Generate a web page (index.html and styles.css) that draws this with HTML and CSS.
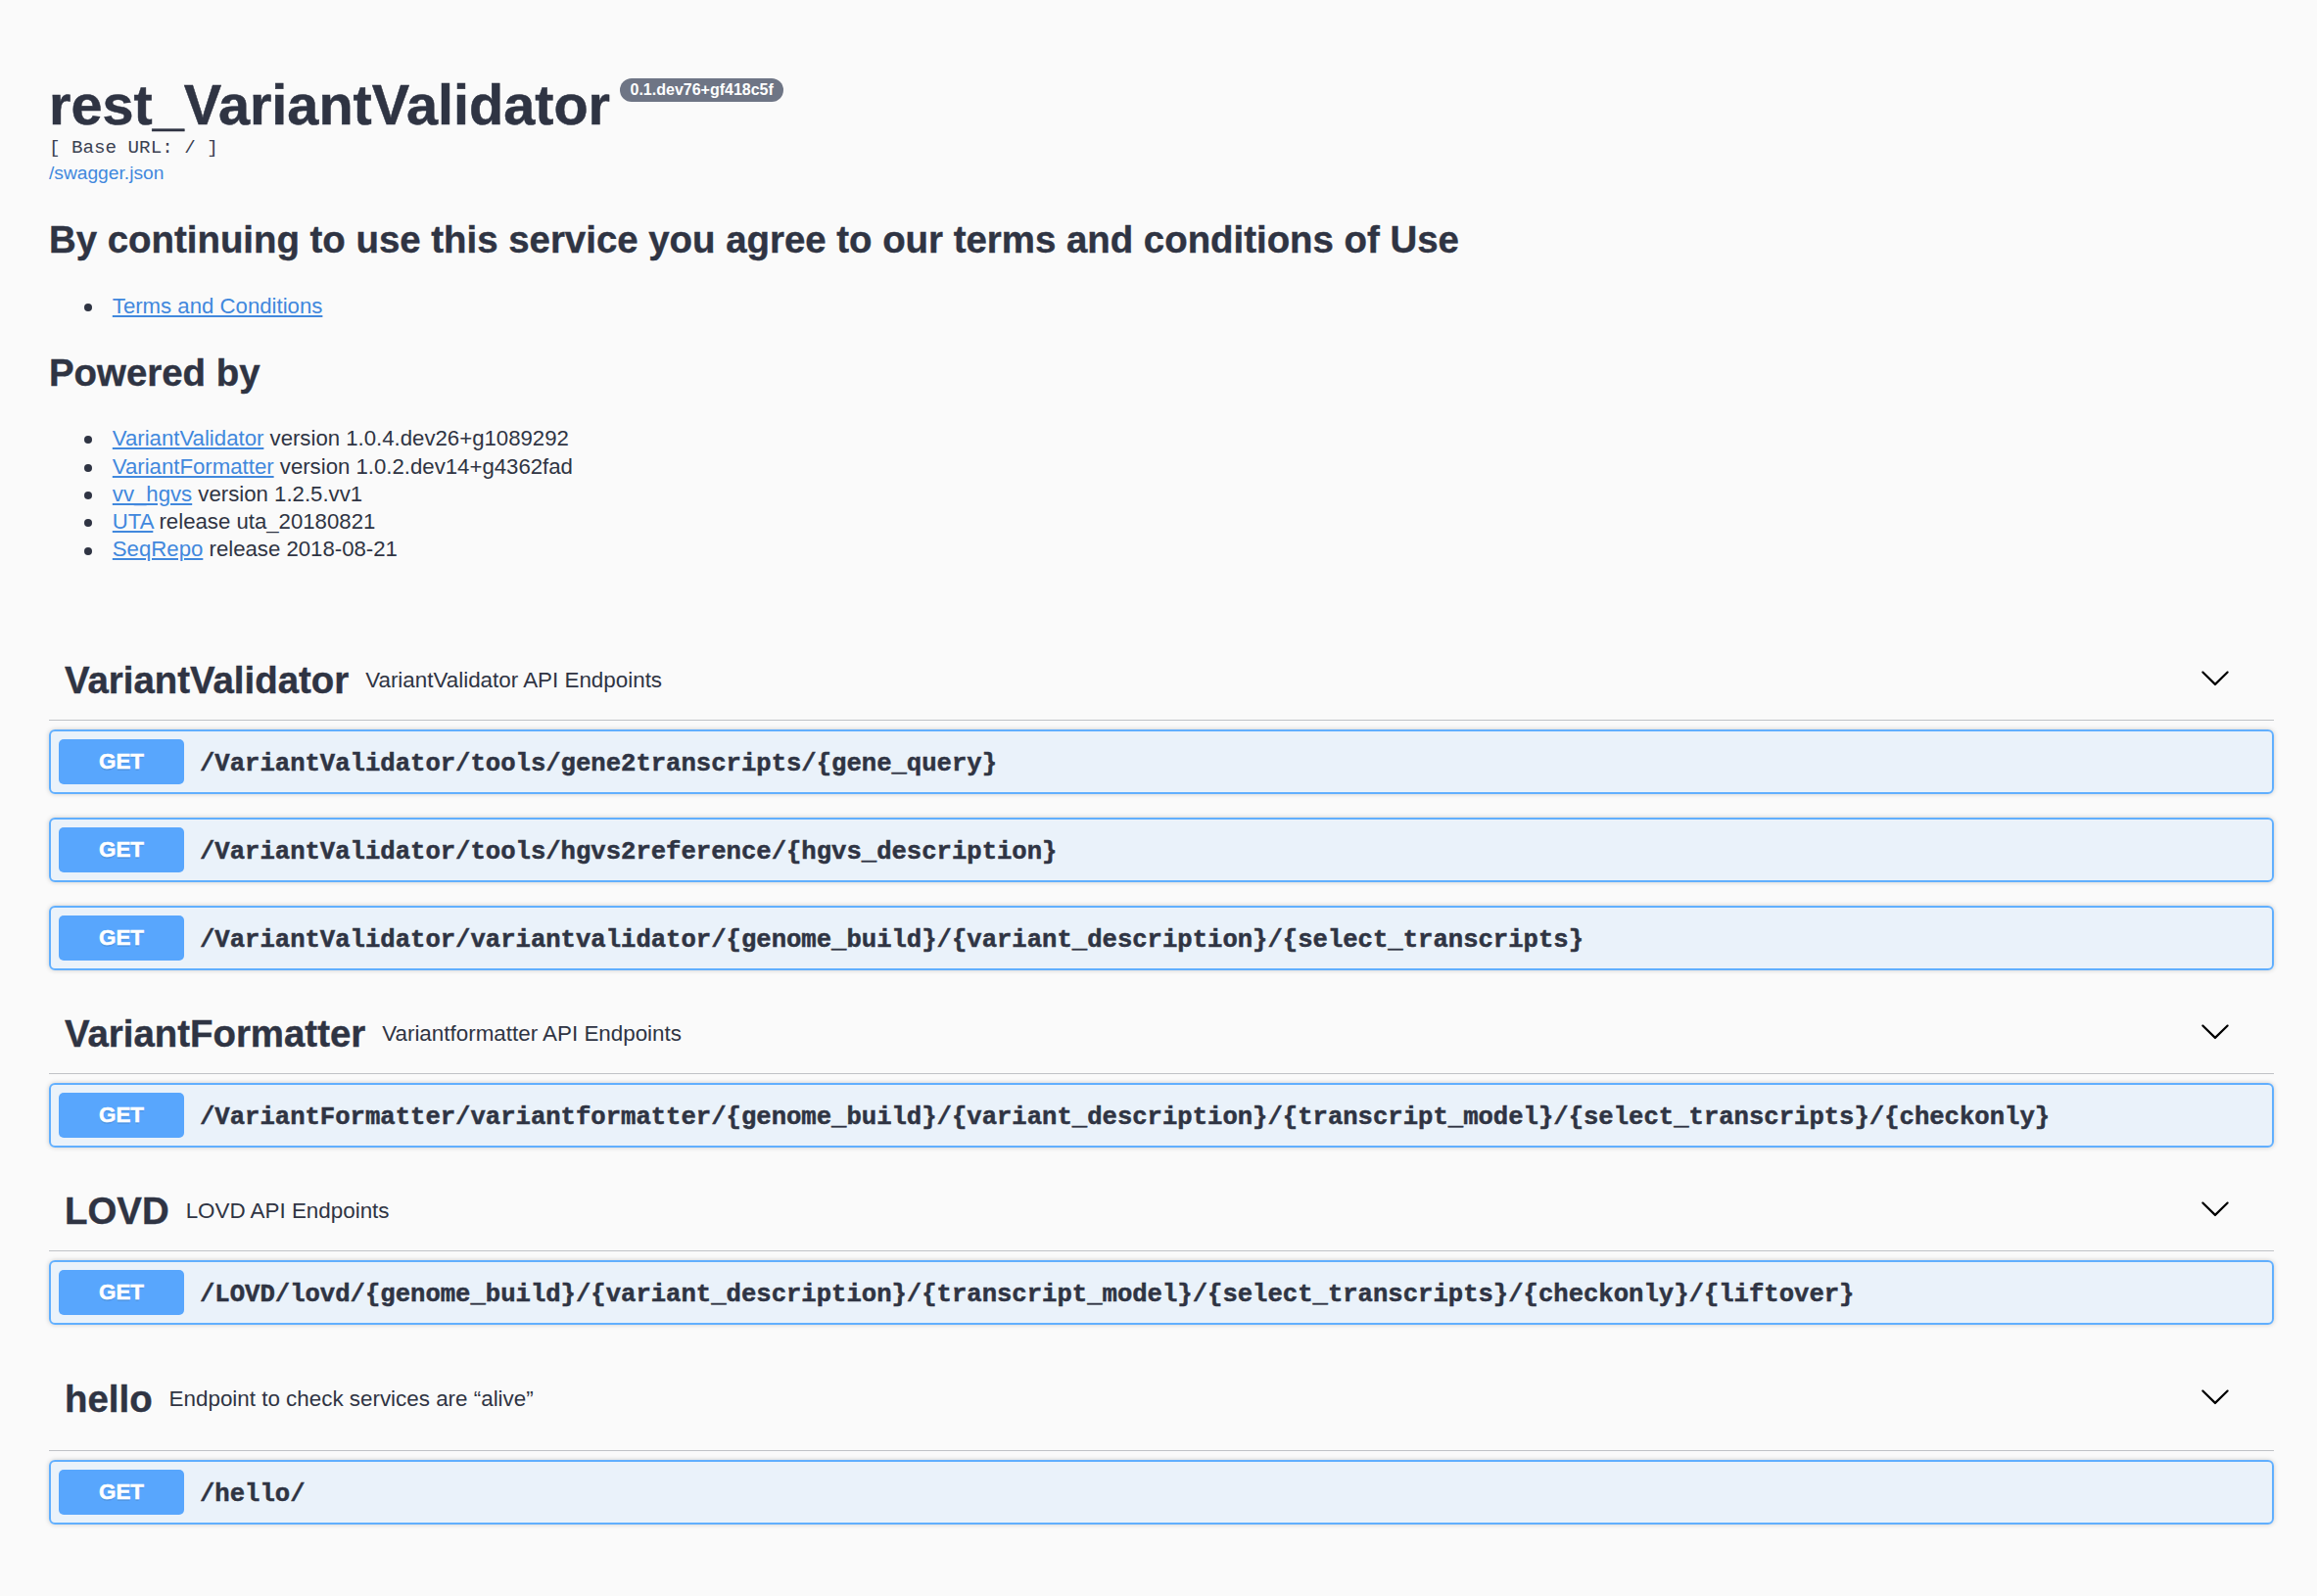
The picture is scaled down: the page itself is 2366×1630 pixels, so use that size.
FILE: index.html
```html
<!DOCTYPE html>
<html lang="en">
<head>
<meta charset="utf-8">
<title>rest_VariantValidator</title>
<link rel="stylesheet" href="styles.css">
</head>
<body>
<div class="wrapper">
  <div class="info">
    <div class="title-row">
      <h1 class="title">rest_VariantValidator</h1>
      <span class="version">0.1.dev76+gf418c5f</span>
    </div>
    <pre class="base-url">[ Base URL: / ]</pre>
    <a class="spec-link" href="#">/swagger.json</a>
    <h2 class="desc-h">By continuing to use this service you agree to our terms and conditions of Use</h2>
    <ul class="list list-terms">
      <li><a href="#">Terms and Conditions</a></li>
    </ul>
    <h2 class="desc-h desc-h2">Powered by</h2>
    <ul class="list list-powered">
      <li><a href="#">VariantValidator</a> version 1.0.4.dev26+g1089292</li>
      <li><a href="#">VariantFormatter</a> version 1.0.2.dev14+g4362fad</li>
      <li><a href="#">vv_hgvs</a> version 1.2.5.vv1</li>
      <li><a href="#">UTA</a> release uta_20180821</li>
      <li><a href="#">SeqRepo</a> release 2018-08-21</li>
    </ul>
  </div>

  <div class="ops">
    <section class="tag-section">
      <h3 class="tag">
        <span class="tag-name">VariantValidator</span>
        <small class="tag-desc">VariantValidator API Endpoints</small>
        <button class="expand" type="button"><svg class="arrow" viewBox="0 0 20 20" width="32" height="32"><path d="M17.418 6.109c.272-.268.709-.268.979 0s.271.701 0 .969l-7.908 7.83c-.27.268-.707.268-.979 0l-7.908-7.830c-.27-.268-.27-.701 0-.969.271-.268.709-.268.979 0L10 13.25l7.418-7.141z"/></svg></button>
      </h3>
      <div class="opblock"><span class="method">GET</span><span class="path">/VariantValidator/tools/gene2transcripts/{gene_query}</span></div>
      <div class="opblock"><span class="method">GET</span><span class="path">/VariantValidator/tools/hgvs2reference/{hgvs_description}</span></div>
      <div class="opblock"><span class="method">GET</span><span class="path">/VariantValidator/variantvalidator/{genome_build}/{variant_description}/{select_transcripts}</span></div>
    </section>

    <section class="tag-section">
      <h3 class="tag">
        <span class="tag-name">VariantFormatter</span>
        <small class="tag-desc">Variantformatter API Endpoints</small>
        <button class="expand" type="button"><svg class="arrow" viewBox="0 0 20 20" width="32" height="32"><path d="M17.418 6.109c.272-.268.709-.268.979 0s.271.701 0 .969l-7.908 7.83c-.27.268-.707.268-.979 0l-7.908-7.830c-.27-.268-.27-.701 0-.969.271-.268.709-.268.979 0L10 13.25l7.418-7.141z"/></svg></button>
      </h3>
      <div class="opblock"><span class="method">GET</span><span class="path">/VariantFormatter/variantformatter/{genome_build}/{variant_description}/{transcript_model}/{select_transcripts}/{checkonly}</span></div>
    </section>

    <section class="tag-section">
      <h3 class="tag">
        <span class="tag-name">LOVD</span>
        <small class="tag-desc">LOVD API Endpoints</small>
        <button class="expand" type="button"><svg class="arrow" viewBox="0 0 20 20" width="32" height="32"><path d="M17.418 6.109c.272-.268.709-.268.979 0s.271.701 0 .969l-7.908 7.83c-.27.268-.707.268-.979 0l-7.908-7.830c-.27-.268-.27-.701 0-.969.271-.268.709-.268.979 0L10 13.25l7.418-7.141z"/></svg></button>
      </h3>
      <div class="opblock"><span class="method">GET</span><span class="path">/LOVD/lovd/{genome_build}/{variant_description}/{transcript_model}/{select_transcripts}/{checkonly}/{liftover}</span></div>
    </section>

    <section class="tag-section">
      <h3 class="tag tag-tall">
        <span class="tag-name">hello</span>
        <small class="tag-desc">Endpoint to check services are “alive”</small>
        <button class="expand" type="button"><svg class="arrow" viewBox="0 0 20 20" width="32" height="32"><path d="M17.418 6.109c.272-.268.709-.268.979 0s.271.701 0 .969l-7.908 7.83c-.27.268-.707.268-.979 0l-7.908-7.830c-.27-.268-.27-.701 0-.969.271-.268.709-.268.979 0L10 13.25l7.418-7.141z"/></svg></button>
      </h3>
      <div class="opblock"><span class="method">GET</span><span class="path">/hello/</span></div>
    </section>
  </div>
</div>
</body>
</html>
```

FILE: styles.css
```css
html, body {
  margin: 0;
  padding: 0;
  background: #fafafa;
}

body {
  font-family: "Liberation Sans", Arial, Helvetica, sans-serif;
  color: #3b4151;
}

.wrapper {
  padding: 0 44px 20px 50px;
}

.info {
  padding-top: 74px;
}

.title-row {
  display: flex;
  align-items: flex-start;
}

.title {
  margin: 0;
  font-size: 57.6px;
  line-height: 66px;
  font-weight: 700;
  color: #2f3443;
  -webkit-text-stroke: 0.5px #2f3443;
}

.version {
  margin: 6px 0 0 10px;
  padding: 3px 10.5px;
  border-radius: 57px;
  background: #6e7585;
  color: #fff;
  font-size: 16px;
  line-height: 18px;
  font-weight: 700;
}

.base-url {
  margin: 0;
  font-family: "Liberation Mono", "Courier New", monospace;
  font-size: 19.2px;
  line-height: 23px;
  color: #3b4151;
}

.spec-link {
  display: block;
  width: max-content;
  font-size: 19.2px;
  line-height: 28.7px;
  color: #4188dd;
  text-decoration: none;
}

.desc-h {
  margin: 31px 0 0;
  font-size: 38.4px;
  line-height: 44px;
  font-weight: 700;
  color: #2f3443;
  -webkit-text-stroke: 0.4px #2f3443;
}

.desc-h2 {
  margin-top: 32.3px;
}

.list {
  margin: 0;
  padding-left: 64.8px;
  list-style: none;
  font-size: 22.2px;
  line-height: 28.3px;
  color: #2f3443;
}

.list-terms {
  margin-top: 32px;
}

.list-powered {
  margin-top: 31px;
}

.list li::before {
  content: "";
  display: inline-block;
  width: 8px;
  height: 8px;
  border-radius: 50%;
  background: #2f3443;
  margin-left: -28.8px;
  margin-right: 20.8px;
  vertical-align: middle;
}

.list a {
  color: #4188dd;
  text-decoration: underline;
}

.ops {
  margin-top: 78.5px;
}

.tag-section {
  display: flex;
  flex-direction: column;
}

.tag {
  display: flex;
  align-items: center;
  box-sizing: content-box;
  height: 49px;
  margin: 0 0 9px;
  padding: 16px 44px 16px 16px;
  border-bottom: 1px solid rgba(59, 65, 81, 0.3);
  font-size: 38.4px;
  font-weight: 700;
  color: #2f3443;
}

.tag-tall {
  padding-top: 27px;
  padding-bottom: 28px;
}

.tag-name {
  line-height: 44px;
  -webkit-text-stroke: 0.4px #2f3443;
}

.tag-desc {
  flex: 1;
  padding: 0 17px;
  font-size: 22.4px;
  line-height: 26px;
  font-weight: 400;
  color: #2f3443;
}

.expand {
  display: flex;
  border: none;
  background: none;
  padding: 0;
  margin: 0;
}

.arrow {
  display: block;
  width: 32px;
  height: 32px;
  margin-bottom: 5px;
  fill: #000;
}

.opblock {
  display: flex;
  align-items: center;
  margin: 0 0 24px;
  padding: 8px;
  border: 2px solid #61affe;
  border-radius: 6px;
  background: rgba(97, 175, 254, 0.1);
  box-shadow: 0 0 4.8px rgba(0, 0, 0, 0.19);
}

.method {
  box-sizing: border-box;
  flex: none;
  width: 128px;
  height: 46px;
  border-radius: 5px;
  background: #58a6fd;
  color: #fff;
  font-size: 22.4px;
  line-height: 46px;
  font-weight: 700;
  text-align: center;
  text-shadow: 0 1.6px 0 rgba(0, 0, 0, 0.1);
  -webkit-text-stroke: 0.5px #fff;
}

.path {
  padding: 6px 16px 0;
  font-family: "Liberation Mono", "Courier New", monospace;
  font-size: 25.6px;
  line-height: 30px;
  font-weight: 700;
  color: #2f3443;
  -webkit-text-stroke: 0.5px #2f3443;
}
```
